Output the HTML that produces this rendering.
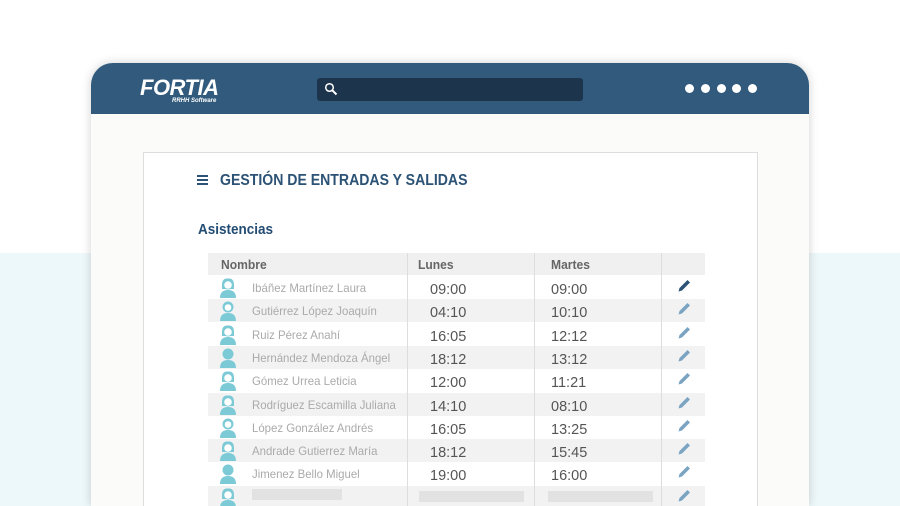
<!DOCTYPE html>
<html style="width:900px;height:506px;overflow:hidden"><head><meta charset="utf-8"><style>
*{margin:0;padding:0;box-sizing:border-box}
body{width:900px;height:506px;overflow:hidden;background:#fff;position:relative;font-family:"Liberation Sans",sans-serif}
.band{position:absolute;left:0;right:0;top:253px;bottom:0;background:#edf8fa}
.win{position:absolute;left:91px;top:63px;width:718px;height:443px;background:#fbfbfa;border-radius:22px 22px 0 0;overflow:hidden;box-shadow:0 0 10px rgba(0,0,0,.18)}
.hdr{position:absolute;left:0;top:0;width:718px;height:51px;background:#315a7d}
.logo{position:absolute;left:49px;top:12px;color:#fff;font-weight:bold;font-style:italic;font-size:22px;letter-spacing:-0.5px}
.logo small{position:absolute;left:32px;top:23px;font-size:6px;white-space:nowrap;letter-spacing:0}
.search{position:absolute;left:226px;top:15px;width:266px;height:23px;background:#1c354c;border-radius:3px}
.dots{position:absolute;left:594px;top:21px;line-height:0}
.dots i{display:inline-block;width:9px;height:9px;border-radius:50%;background:#fff;margin-right:6.8px}
.card{position:absolute;left:52px;top:89px;width:615px;height:400px;background:#fff;border:1px solid #ddd}
.t1{position:absolute;left:220px;top:172px;font-size:16px;font-weight:bold;color:#2c5375;transform:scaleX(0.88);transform-origin:0 0;white-space:nowrap}
.ham{position:absolute;left:197px;top:175px;width:11px}
.ham i{display:block;height:2px;background:#2c5375;margin-bottom:2px}
.t2{position:absolute;left:198px;top:221px;font-size:15px;font-weight:bold;color:#234c73;transform:scaleX(0.9);transform-origin:0 0}
.th{position:absolute;left:208px;top:253px;width:497px;height:22px;background:#f0f0f0}
.row{position:absolute;left:208px;width:497px;height:23px}
.sh{background:#f2f2f2}
.vl{position:absolute;top:253px;height:253px;width:1px;background:#ddd}
.c{position:absolute;font-size:12px;color:#aaa;white-space:nowrap;transform:scaleX(0.95);transform-origin:0 0}
.n{position:absolute;font-size:14.5px;color:#555}
.h{position:absolute;top:257px;font-size:13px;font-weight:bold;color:#666;transform:scaleX(0.93);transform-origin:0 0}
.bar{position:absolute;height:11px;background:#e2e2e2}
</style></head><body>
<div class="band"></div>
<div class="win">
<div class="hdr">
<div class="logo">FORTIA<small>RRHH Software</small></div>
<div class="search"><svg width="14" height="14" style="position:absolute;left:7px;top:4px" viewBox="0 0 14 14"><circle cx="5.5" cy="5.5" r="3.8" fill="none" stroke="#fff" stroke-width="1.5"/><path d="M8.3 8.3L12.5 12.5" stroke="#fff" stroke-width="2"/></svg></div>
<div class="dots"><i></i><i></i><i></i><i></i><i></i></div>
</div>
<div class="card"></div>
</div>
<div class="ham"><i></i><i></i><i></i></div>
<div class="t1">GESTIÓN DE ENTRADAS Y SALIDAS</div>
<div class="t2">Asistencias</div>
<div class="th"></div>
<div id="rows"></div>
<div class="h" style="left:221px">Nombre</div>
<div class="h" style="left:418px">Lunes</div>
<div class="h" style="left:551px">Martes</div>
<script>
var d=[["Ibáñez Martínez Laura","09:00","09:00",1],["Gutiérrez López Joaquín","04:10","10:10",0],["Ruiz Pérez Anahí","16:05","12:12",1],["Hernández Mendoza Ángel","18:12","13:12",0],["Gómez Urrea Leticia","12:00","11:21",1],["Rodríguez Escamilla Juliana","14:10","08:10",1],["López González Andrés","16:05","13:25",0],["Andrade Gutierrez María","18:12","15:45",1],["Jimenez Bello Miguel","19:00","16:00",0],["","","",1]];
var h="";
d.forEach(function(r,i){var t=276+i*23.3;
if(i%2)h+='<div class="row sh" style="top:'+t+'px"></div>';
var f=r[3];
h+='<svg style="position:absolute;left:219px;top:'+(t+1)+'px" width="18" height="21" viewBox="0 0 18 21"><circle cx="9" cy="7" r="5.5" fill="#7ccad6"/>'+(f?'<path d="M3 8Q3 1 9 1.5Q15 1 15 8L15 12L3 12Z" fill="#7ccad6"/><circle cx="9" cy="8" r="3.8" fill="#fff"/>':'<circle cx="9" cy="7.5" r="3.3" fill="#fff" opacity="'+(i==3||i==8?0:1)+'"/>')+'<path d="M1 21Q1 13 9 13Q17 13 17 21Z" fill="#7ccad6"/></svg>';
if(r[0]){h+='<div class="c" style="left:252px;top:'+(t+5)+'px">'+r[0]+'</div><div class="n" style="left:430px;top:'+(t+6)+'px">'+r[1]+'</div><div class="n" style="left:551px;top:'+(t+6)+'px">'+r[2]+'</div>';}
else{h+='<div class="bar" style="left:252px;top:'+(t+3)+'px;width:90px"></div><div class="bar" style="left:419px;top:'+(t+5)+'px;width:105px"></div><div class="bar" style="left:548px;top:'+(t+5)+'px;width:105px"></div>';}
var c=i==0?'#2c5375':'#7ba3c2';
h+='<svg style="position:absolute;left:677px;top:'+(t+3)+'px" width="14" height="14" viewBox="0 0 14 14"><path d="M1.5 12.5L2.5 9L10.5 1L13 3.5L5 11.5Z" fill="'+c+'"/></svg>';
});
h+='<div class="vl" style="left:407px"></div><div class="vl" style="left:534px"></div><div class="vl" style="left:661px"></div>';
document.getElementById("rows").innerHTML=h;
</script>
</body></html>
